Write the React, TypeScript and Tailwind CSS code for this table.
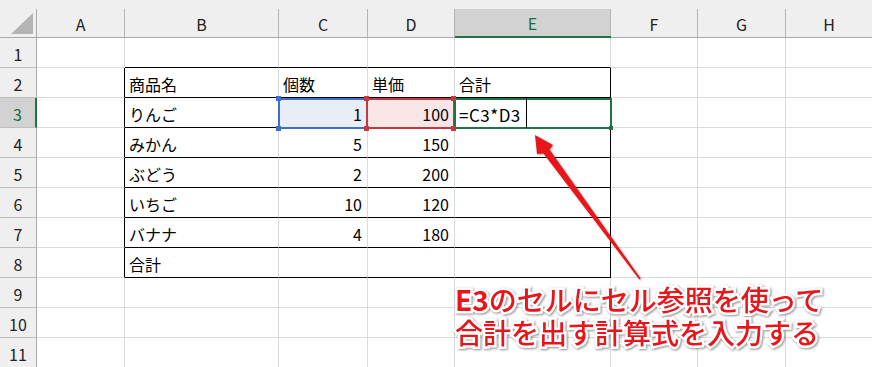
import React from "react";

const COLS = ["A", "B", "C", "D", "E", "F", "G", "H"];
const ROWS = [1, 2, 3, 4, 5, 6, 7, 8, 9, 10, 11];

type Cell = { t: string; r?: boolean };
const DATA: Record<string, Cell> = {
  B2: { t: "商品名" }, C2: { t: "個数" }, D2: { t: "単価" }, E2: { t: "合計" },
  B3: { t: "りんご" }, C3: { t: "1", r: true }, D3: { t: "100", r: true }, E3: { t: "=C3*D3" },
  B4: { t: "みかん" }, C4: { t: "5", r: true }, D4: { t: "150", r: true },
  B5: { t: "ぶどう" }, C5: { t: "2", r: true }, D5: { t: "200", r: true },
  B6: { t: "いちご" }, C6: { t: "10", r: true }, D6: { t: "120", r: true },
  B7: { t: "バナナ" }, C7: { t: "4", r: true }, D7: { t: "180", r: true },
  B8: { t: "合計" },
};

const FONT = "[font-family:'Noto_Sans_CJK_JP','Noto_Sans',sans-serif]";

function Handle({ cls }: { cls: string }) {
  return <div className={`absolute z-20 w-[5px] h-[5px] ${cls}`} />;
}

function GridCell({ ci, row }: { ci: number; row: number }) {
  const key = COLS[ci] + row;
  const rightBlack = (ci === 0 || ci === 4) && row >= 2 && row <= 8;
  const bottomBlack = ci >= 1 && ci <= 4 && row >= 1 && row <= 8;
  const d = DATA[key];
  const selected = key === "C3" || key === "D3" || key === "E3";
  let bg = "bg-white";
  if (key === "C3") bg = "bg-[#e8eef8]";
  if (key === "D3") bg = "bg-[#f8e6e6]";
  return (
    <div
      className={`${selected ? "relative" : ""} border-r border-b ${bg} ${rightBlack ? "border-r-black" : "border-r-[#dadada]"} ${
        bottomBlack ? "border-b-black" : "border-b-[#dadada]"
      } flex items-center pt-[3px] ${d?.r ? "justify-end pr-[5px]" : "justify-start pl-[4px]"}`}
    >
      {d && (
        <span className={`leading-none text-black whitespace-nowrap ${key === "E3" ? "text-[17px] tracking-[0.5px]" : "text-[16px]"}`}>
          {d.t}
        </span>
      )}
      {key === "C3" && (
        <>
          <div className="absolute z-10 -left-px top-0 -right-px -bottom-[2px] border-2 border-[#3f6fc6]" />
          <Handle cls="-left-[3px] -top-[2px] bg-[#3f6fc6]" />
          <Handle cls="-left-[3px] top-[28px] bg-[#3f6fc6]" />
        </>
      )}
      {key === "D3" && (
        <>
          <div className="absolute z-10 -left-[2px] top-0 -right-px -bottom-[2px] border-2 border-[#c3393f]" />
          <Handle cls="-left-[4px] -top-[2px] bg-[#c3393f]" />
          <Handle cls="-left-[4px] top-[28px] bg-[#c3393f]" />
          <Handle cls="left-[83px] -top-[2px] bg-[#c3393f]" />
          <Handle cls="left-[83px] top-[28px] bg-[#c3393f]" />
        </>
      )}
      {key === "E3" && (
        <>
          <div className="absolute z-10 -left-px top-0 -right-[2px] -bottom-[2px] border-2 border-[#217346]" />
          <div className="absolute z-10 left-[71px] top-0 w-px h-[30px] bg-black" />
          <div className="absolute z-20 left-[154px] top-[28px] w-[4px] h-[4px] bg-[#217346]" />
        </>
      )}
    </div>
  );
}

export default function App() {
  return (
    <div className={`relative w-[872px] h-[367px] overflow-hidden bg-white ${FONT}`}>
      <div className="grid grid-cols-[37px_88px_154px_89px_87px_156px_87px_88px_87px] grid-rows-[38px_repeat(11,30px)]">
        {/* corner */}
        <div className="bg-[#efefef] border-b border-b-[#a9a9a9] flex flex-col">
          <div className="h-[9px]" />
          <div className="flex-1 border-r border-r-[#a9a9a9] relative">
            <svg className="absolute left-0 top-0" width="36" height="28" viewBox="0 0 36 28">
              <polygon points="11,25 33,4 33,25" fill="#b4b4b4" />
            </svg>
          </div>
        </div>
        {COLS.map((c) => {
          const sel = c === "E";
          return (
            <div
              key={c}
              className={`flex flex-col ${sel ? "bg-[#d2d2d2] border-b-2 border-b-[#217346]" : "bg-[#efefef] border-b border-b-[#a9a9a9]"}`}
            >
              <div className="h-[9px] bg-[#efefef]" />
              <div
                className={`flex-1 border-r border-r-[#b5b5b5] flex items-center justify-center pt-[1px] text-[16px] leading-none ${
                  sel ? "text-[#1d6b3f]" : "text-[#222]"
                }`}
              >
                {c}
              </div>
            </div>
          );
        })}
        {ROWS.map((r) => (
          <React.Fragment key={r}>
            <div
              className={`flex items-center justify-center pt-[2px] text-[16px] leading-none border-b border-b-[#bdbdbd] ${
                r === 3
                  ? "bg-[#d2d2d2] text-[#1d6b3f] border-r-2 border-r-[#217346]"
                  : "bg-[#efefef] text-[#222] border-r border-r-[#a9a9a9]"
              }`}
            >
              {r}
            </div>
            {COLS.map((_, ci) => (
              <GridCell key={ci} ci={ci} row={r} />
            ))}
          </React.Fragment>
        ))}
      </div>

      {/* annotation arrow */}
      <svg className="absolute left-0 top-0 z-30 pointer-events-none" width="872" height="367" viewBox="0 0 872 367">
        <polygon
          points="535,135 553,145 549.5,149.5 640.7,278.6 639.3,279.4 543.5,153.5 537,154"
          fill="#e8161b"
          style={{ filter: "drop-shadow(1px 1px 1px rgba(0,0,0,0.35))" }}
        />
      </svg>

      {/* annotation text */}
      <div className="absolute z-30 left-[455px] top-[285px] text-[28px] text-[#e8161b] whitespace-nowrap font-medium [-webkit-text-stroke:5px_white] [paint-order:stroke_fill] [filter:drop-shadow(1px_1px_1px_rgba(0,0,0,0.45))]">
        <div className="leading-[28px]">
          <span className="font-bold">E3</span>のセルにセル参照を使って
        </div>
        <div className="leading-[28px] mt-[5px]">合計を出す計算式を入力する</div>
      </div>
    </div>
  );
}
